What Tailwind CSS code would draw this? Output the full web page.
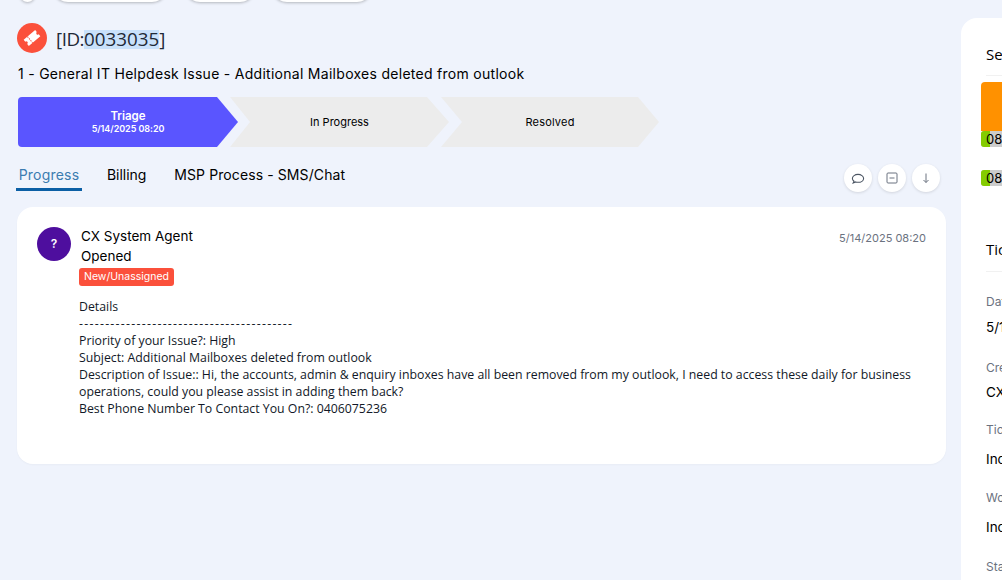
<!DOCTYPE html>
<html lang="en">

<head>
    <meta charset="UTF-8">
    <meta name="viewport" content="width=device-width, initial-scale=1.0">
    <title>Ticket 0033035</title>
    <script src="https://cdn.jsdelivr.net/npm/@tailwindcss/browser@4"></script>
</head>

<body class="h-[580px] w-[1002px] overflow-hidden bg-[#eff3fc] font-['Inter',sans-serif] text-black">
    <div class="flex h-[580px]">

        <!-- Main column -->
        <main class="w-[961px] shrink-0 pl-[17px] pr-[15px]">

            <!-- Toolbar, scrolled off the top -->
            <div class="flex h-[2px] items-end overflow-visible">
                <div class="ml-[3px] h-[30px] w-[15px] shrink-0 rounded-full bg-white shadow-[0_1px_3px_rgba(0,0,0,0.25)]"></div>
                <div class="ml-[18px] h-[30px] w-[114px] shrink-0 rounded-full bg-white shadow-[0_1px_3px_rgba(0,0,0,0.25)]"></div>
                <div class="ml-[18px] h-[30px] w-[70px] shrink-0 rounded-full bg-white shadow-[0_1px_3px_rgba(0,0,0,0.25)]"></div>
                <div class="ml-[17px] h-[30px] w-[100px] shrink-0 rounded-full bg-white shadow-[0_1px_3px_rgba(0,0,0,0.25)]"></div>
            </div>

            <!-- Ticket title -->
            <div class="mt-[21px] flex h-[30px] items-center gap-[9px]">
                <div class="flex h-[30px] w-[30px] items-center justify-center rounded-full bg-[#fb503b]">
                    <svg width="20" height="20" viewBox="0 0 20 20">
                        <g transform="rotate(-40 10 10)">
                            <path d="M2.5 6h15v2.5a1.5 1.5 0 0 0 0 3V14h-15v-2.5a1.5 1.5 0 0 0 0-3z" fill="#fff"></path>
                            <path d="M7.4 6v8" stroke="#fb503b" stroke-width="1" stroke-dasharray="1.4 1"></path>
                        </g>
                    </svg>
                </div>
                <div class="pt-[2px] font-['Open_Sans',sans-serif] text-[18.8px] leading-[28px] text-[#1f2937]"><span class="tracking-[-0.5px]">[ID:</span><span class="inline-block h-[19px] bg-[#c9e1fb] leading-[19px]">0033035</span>]</div>
            </div>

            <div class="mt-[11px] pl-px text-[14px] leading-[20px] tracking-[0.28px]">1 - General IT Helpdesk Issue - Additional Mailboxes deleted from outlook</div>

            <!-- Status steps -->
            <div class="mt-[13px] flex pl-px">
                <div class="flex h-[50px] w-[220px] flex-col items-center justify-center rounded-l-[4px] bg-[#5a55ff] text-white [clip-path:polygon(0_0,199px_0,100%_50%,199px_100%,0_100%)]">
                    <div class="text-[11.5px] font-semibold leading-[14px]">Triage</div>
                    <div class="text-[9px] font-semibold leading-[12px] tracking-[-0.05px]">5/14/2025 08:20</div>
                </div>
                <div class="-ml-2 flex h-[50px] w-[219px] items-center justify-center bg-[#ececec] text-[11px] [clip-path:polygon(0_0,197px_0,100%_50%,197px_100%,0_100%,20px_50%)]">In Progress</div>
                <div class="-ml-2 flex h-[50px] w-[218px] items-center justify-center bg-[#ececec] text-[11px] tracking-[0.2px] [clip-path:polygon(0_0,197px_0,100%_50%,197px_100%,0_100%,21px_50%)]">Resolved</div>
            </div>

            <!-- Tabs -->
            <div class="mt-[16px] flex h-[29px] items-start justify-between">
                <div class="-ml-px flex text-[14px] leading-[24px]">
                    <div class="h-[28px] w-[66px] border-b-[3px] border-[#0b5fa5] text-center tracking-[0.2px] text-[#3b7cb0]">Progress</div>
                    <div class="ml-[25px] tracking-[-0.05px]">Billing</div>
                    <div class="ml-[28px] tracking-[0.1px]">MSP Process - SMS/Chat</div>
                </div>
                <div class="mr-[6px] flex gap-[6px] pt-px">
                    <button class="flex h-[28px] w-[28px] items-center justify-center rounded-full bg-white shadow-[0_1px_3px_rgba(0,0,0,0.12)]">
                        <svg width="14" height="14" viewBox="0 0 14 14" fill="none" stroke="#4b5563" stroke-width="1.1">
                            <path d="M3 10.2C1.9 9.5 1.4 8.5 1.4 7.4c0-2.2 2.5-4 5.6-4s5.6 1.8 5.6 4-2.5 3.9-5.6 3.9c-.8 0-1.6-.1-2.3-.4l-2.5 1z"></path>
                        </svg>
                    </button>
                    <button class="flex h-[28px] w-[28px] items-center justify-center rounded-full bg-white shadow-[0_1px_3px_rgba(0,0,0,0.12)]">
                        <svg width="14" height="14" viewBox="0 0 14 14" fill="none" stroke="#6b7280" stroke-width="1">
                            <rect x="2" y="2" width="10" height="10" rx="1"></rect>
                            <path d="M4.5 7h5"></path>
                        </svg>
                    </button>
                    <button class="flex h-[28px] w-[28px] items-center justify-center rounded-full bg-white shadow-[0_1px_3px_rgba(0,0,0,0.12)]">
                        <svg width="14" height="14" viewBox="0 0 14 14" fill="none" stroke="#6b7280" stroke-width="1">
                            <path d="M7 2.5v9M4.5 9 7 11.5 9.5 9"></path>
                        </svg>
                    </button>
                </div>
            </div>

            <!-- Progress entry -->
            <div class="mt-[15px] h-[257px] rounded-[16px] bg-white px-[20px] pt-[20px] shadow-[0_1px_2px_rgba(0,0,0,0.03)]">
                <div class="flex items-start">
                    <div class="flex h-[34px] w-[34px] shrink-0 items-center justify-center rounded-full bg-[#4e0e9e] text-[12px] font-semibold text-white">?</div>
                    <div class="ml-[10px] flex-1 -mt-[1px]">
                        <div class="flex h-[20px] items-start justify-between">
                            <div class="text-[13.5px] leading-[20px]">CX System Agent</div>
                            <div class="text-[11px] leading-[24px] text-[#6b7280]">5/14/2025 08:20</div>
                        </div>
                        <div class="text-[13.5px] leading-[20px]">Opened</div>
                    </div>
                </div>
                <div class="ml-[42px] mt-[2px]">
                    <span class="block h-[18px] w-[95px] rounded-[3px] bg-[#fb503b] text-center text-[10.5px] leading-[18px] text-white">New/Unassigned</span>
                    <div class="mt-[12px] font-['Open_Sans',sans-serif] text-[12.3px] leading-[17px] text-[#111827]">
                        <p>Details</p>
                        <p class="tracking-[1.27px]">-----------------------------------------</p>
                        <p>Priority of your Issue?: High</p>
                        <p>Subject: Additional Mailboxes deleted from outlook</p>
                        <p>Description of Issue:: Hi, the accounts, admin &amp; enquiry inboxes have all been removed from my outlook, I need to access these daily for business operations, could you please assist in adding them back?</p>
                        <p>Best Phone Number To Contact You On?: 0406075236</p>
                    </div>
                </div>
            </div>
        </main>

        <!-- Side panel, runs past the right edge -->
        <aside class="mt-[18px] h-[600px] w-[300px] shrink-0 rounded-tl-[16px] bg-white pl-[25px]">
            <div class="h-[58px] border-b border-[#f1f1f1] pt-[26px] font-['Open_Sans',sans-serif] text-[15px] leading-[20px]">Service Level</div>
            <div class="-ml-[5px] mt-[6px] w-[260px]">
                <div class="h-[49px] rounded-t-[4px] bg-[#ff9100]"></div>
                <div class="flex h-[16px] overflow-hidden rounded-[3px] bg-[#cccccc] text-[13px] leading-[16px]">
                    <div class="w-[9px] shrink-0 bg-[#84cc00]"></div>
                    <div class="-ml-[4px]">08:20</div>
                </div>
                <div class="mt-[23px] flex h-[16px] overflow-hidden rounded-[3px] bg-[#cccccc] text-[13px] leading-[16px]">
                    <div class="w-[9px] shrink-0 bg-[#84cc00]"></div>
                    <div class="-ml-[4px]">08:20</div>
                </div>
            </div>
            <div class="mt-[53px] h-[33px] border-b border-[#f1f1f1] font-['Open_Sans',sans-serif] text-[15px] leading-[20px]">Ticket Details</div>
            <div class="mt-[22px] text-[12px] leading-[16px] text-[#6b7280]">Date</div>
            <div class="mt-[9px] text-[13.5px] leading-[16px]">5/14/2025 08:20</div>
            <div class="mt-[25px] text-[12px] leading-[16px] text-[#6b7280]">Created By</div>
            <div class="mt-[8px] text-[13.5px] leading-[16px]">CX System Agent</div>
            <div class="mt-[22px] text-[12px] leading-[16px] text-[#6b7280]">Ticket Type</div>
            <div class="mt-[13px] text-[13.5px] leading-[16px]">Incident</div>
            <div class="mt-[23px] text-[12px] leading-[16px] text-[#6b7280]">Workflow</div>
            <div class="mt-[13px] text-[13.5px] leading-[16px]">Incident</div>
            <div class="mt-[24px] text-[12px] leading-[16px] text-[#6b7280]">Status</div>
        </aside>
    </div>
</body>

</html>
